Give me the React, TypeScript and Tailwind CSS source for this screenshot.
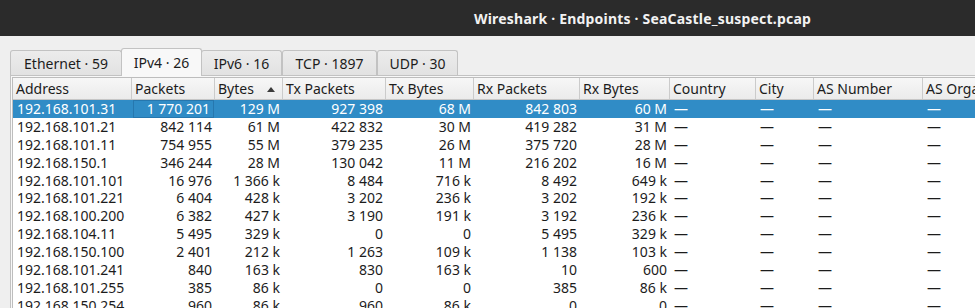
import React from "react";

const N = "\u00A0";
const rows: string[][] = [
  ["192.168.101.31", `1${N}770${N}201`, "129 M", `927${N}398`, "68 M", `842${N}803`, "60 M"],
  ["192.168.101.21", `842${N}114`, "61 M", `422${N}832`, "30 M", `419${N}282`, "31 M"],
  ["192.168.101.11", `754${N}955`, "55 M", `379${N}235`, "26 M", `375${N}720`, "28 M"],
  ["192.168.150.1", `346${N}244`, "28 M", `130${N}042`, "11 M", `216${N}202`, "16 M"],
  ["192.168.101.101", `16${N}976`, `1${N}366 k`, `8${N}484`, "716 k", `8${N}492`, "649 k"],
  ["192.168.101.221", `6${N}404`, "428 k", `3${N}202`, "236 k", `3${N}202`, "192 k"],
  ["192.168.100.200", `6${N}382`, "427 k", `3${N}190`, "191 k", `3${N}192`, "236 k"],
  ["192.168.104.11", `5${N}495`, "329 k", "0", "0", `5${N}495`, "329 k"],
  ["192.168.150.100", `2${N}401`, "212 k", `1${N}263`, "109 k", `1${N}138`, "103 k"],
  ["192.168.101.241", "840", "163 k", "830", "163 k", "10", "600"],
  ["192.168.101.255", "385", "86 k", "0", "0", "385", "86 k"],
  ["192.168.150.254", "960", "86 k", "960", "86 k", "0", "0"],
];

const headers = [
  "Address",
  "Packets",
  "Bytes",
  "Tx Packets",
  "Tx Bytes",
  "Rx Packets",
  "Rx Bytes",
  "Country",
  "City",
  "AS Number",
  "AS Organization",
];

const gridCols =
  "grid grid-cols-[119px_83px_68px_103px_88px_106px_90px_86px_58px_109px_140px]";

const tabs = [
  { label: "Ethernet · 59", w: "w-[112px]" },
  { label: "IPv4 · 26", w: "w-[81px]", active: true },
  { label: "IPv6 · 16", w: "w-[81px]" },
  { label: "TCP · 1897", w: "w-[95px]" },
  { label: "UDP · 30", w: "w-[81px]" },
];

export default function App() {
  return (
    <div
      className="w-[975px] h-[308px] overflow-hidden bg-[#efefef] flex flex-col text-[#1c1c1c]"
      style={{ fontFamily: '"Noto Sans", "DejaVu Sans", sans-serif' }}
    >
      {/* Title bar */}
      <div className="h-[36px] shrink-0 bg-[#2b2b2b] flex items-center pl-[474px]">
        <span className="text-[14px] font-bold text-[#f2f2f2] whitespace-nowrap tracking-[0.2px]">
          Wireshark · Endpoints · SeaCastle_suspect.pcap
        </span>
      </div>

      {/* Content */}
      <div className="flex-1 flex flex-col pt-[12px] pl-[10px]">
        {/* Tabs */}
        <div className="flex items-end h-[27px] shrink-0 relative z-10">
          {tabs.map((t) =>
            t.active ? (
              <div
                key={t.label}
                className={`${t.w} h-[28px] -mb-px bg-[#f8f8f8] border border-b-0 border-[#c2c2c2] rounded-t-[3px] flex items-center justify-center text-[14px] whitespace-nowrap -mx-px relative z-10`}
              >
                {t.label}
              </div>
            ) : (
              <div
                key={t.label}
                className={`${t.w} h-[25px] bg-gradient-to-b from-[#ececec] to-[#e2e2e2] border border-[#c2c2c2] border-b-0 rounded-t-[3px] flex items-center justify-center text-[14px] whitespace-nowrap pt-[1px]`}
              >
                {t.label}
              </div>
            )
          )}
        </div>

        {/* Pane */}
        <div className="flex-1 border-t border-l border-[#c2c2c2] bg-[#f8f8f8] pl-[1px] pt-[1px] overflow-hidden">
          <div className="h-full border-t border-l border-[#bdbdbd] bg-white overflow-hidden">
            {/* Header */}
            <div className={`${gridCols} h-[22px] bg-gradient-to-b from-[#f7f7f7] to-[#ebebeb] border-b border-[#c6c6c6]`}>
              {headers.map((h, i) => (
                <div
                  key={h}
                  className="relative flex items-center pl-[3px] text-[14px] whitespace-nowrap overflow-hidden border-r border-[#cbcbcb]"
                >
                  {h}
                  {i === 2 && (
                    <svg
                      className="absolute right-[7px] top-[9px]"
                      width="8"
                      height="5"
                      viewBox="0 0 8 5"
                    >
                      <path d="M0 5 L4 0 L8 5 Z" fill="#3a3a3a" />
                    </svg>
                  )}
                </div>
              ))}
            </div>

            {/* Rows */}
            {rows.map((r, ri) => {
              const sel = ri === 0;
              return (
                <div
                  key={r[0]}
                  className={`${gridCols} h-[17.9px] text-[14px] leading-[17.9px] ${
                    sel ? "bg-[#308cc6] text-white" : "text-[#1c1c1c]"
                  }`}
                >
                  <div className="pl-[4px] whitespace-nowrap overflow-hidden">{r[0]}</div>
                  {r.slice(1).map((v, ci) => (
                    <div
                      key={ci}
                      className={`text-right pr-[3px] whitespace-nowrap overflow-hidden ${
                        sel && ci === 0 ? "border border-[#2677ae] leading-[15.9px] mx-[1px] pr-[2px]" : ""
                      }`}
                    >
                      {v}
                    </div>
                  ))}
                  {[0, 1, 2, 3].map((k) => (
                    <div key={"d" + k} className="pl-[4px] whitespace-nowrap">
                      —
                    </div>
                  ))}
                </div>
              );
            })}
          </div>
        </div>
      </div>
    </div>
  );
}
